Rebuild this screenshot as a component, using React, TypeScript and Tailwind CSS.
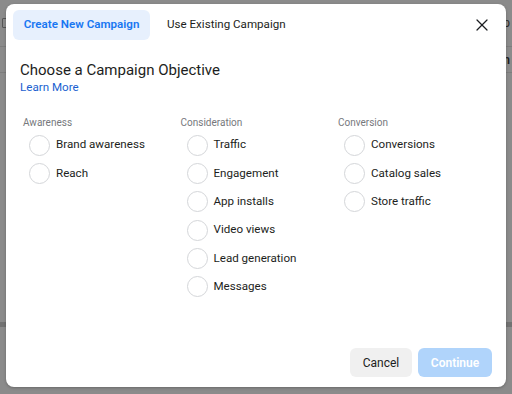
import { X } from "lucide-react"

const columns = [
  { title: "Awareness", items: ["Brand awareness", "Reach"] },
  {
    title: "Consideration",
    items: ["Traffic", "Engagement", "App installs", "Video views", "Lead generation", "Messages"],
  },
  { title: "Conversion", items: ["Conversions", "Catalog sales", "Store traffic"] },
]

function Radio({ label }: { label: string }) {
  return (
    <label className="flex h-[28.3px] items-center gap-[6px] pl-[6px]">
      <span className="h-[21px] w-[21px] shrink-0 rounded-full border border-[#d4d6d9] bg-white" />
      <span className="text-[11.6px] text-[#1c1e21]">{label}</span>
    </label>
  )
}

export default function App() {
  return (
    <div className="relative h-[394px] w-[512px] overflow-hidden bg-[#8b8b8b] font-['Roboto',sans-serif]">
      {/* Page behind the overlay */}
      <div className="flex flex-col">
        <div className="flex h-[47px] items-center justify-between border-b border-[#7d7d7d] px-[2px] text-[12px] text-[#2a2a2a]">
          <span className="h-[10px] w-[8px] rounded-[1px] border border-[#555]" />
          <span>Up</span>
        </div>
        <div className="flex h-[26px] items-center justify-end border-b border-[#7d7d7d] px-[2px] text-[12px] font-semibold text-[#1e1e1e]">
          In
        </div>
        <div className="h-[249px]" />
        <div className="h-[5px] bg-[#727272]" />
      </div>

      {/* Modal */}
      <div className="absolute left-[6px] top-[4px] flex h-[383px] w-[500px] flex-col rounded-[8px] bg-white shadow-[0_1px_3px_rgba(0,0,0,0.25)]">
        <div className="flex items-center pl-[7px] pt-[6px]">
          <button className="h-[30px] w-[137px] rounded-[6px] bg-[#e7f0fd] text-[11.6px] font-semibold text-[#1877f2]">
            Create New Campaign
          </button>
          <button className="h-[30px] px-[17px] text-[11.6px] text-[#1c1e21]">Use Existing Campaign</button>
          <X className="ml-auto mr-[14px] h-[20px] w-[20px] text-[#1c1e21]" strokeWidth={1.5} />
        </div>

        <div className="px-[14px] pt-[20px]">
          <h2 className="text-[15px] leading-[20px] text-[#1c1e21]">Choose a Campaign Objective</h2>
          <a className="block text-[11.6px] leading-[14px] text-[#1a5fd0]">Learn More</a>
        </div>

        <div className="flex pl-[17px] pt-[22px]">
          {columns.map((col) => (
            <div key={col.title} className="w-[157.5px] shrink-0">
              <div className="mb-[2px] text-[10px] leading-[13px] text-[#76787c]">{col.title}</div>
              {col.items.map((item) => (
                <Radio key={item} label={item} />
              ))}
            </div>
          ))}
        </div>

        <div className="mt-auto flex justify-end gap-[6px] px-[14px] pb-[10px]">
          <button className="h-[29px] w-[62px] rounded-[6px] bg-[#f0f0f0] text-[12px] text-[#1c1e21]">Cancel</button>
          <button className="h-[29px] w-[74px] rounded-[6px] bg-[#b0d4fb] text-[12px] font-semibold text-white">
            Continue
          </button>
        </div>
      </div>
    </div>
  )
}
